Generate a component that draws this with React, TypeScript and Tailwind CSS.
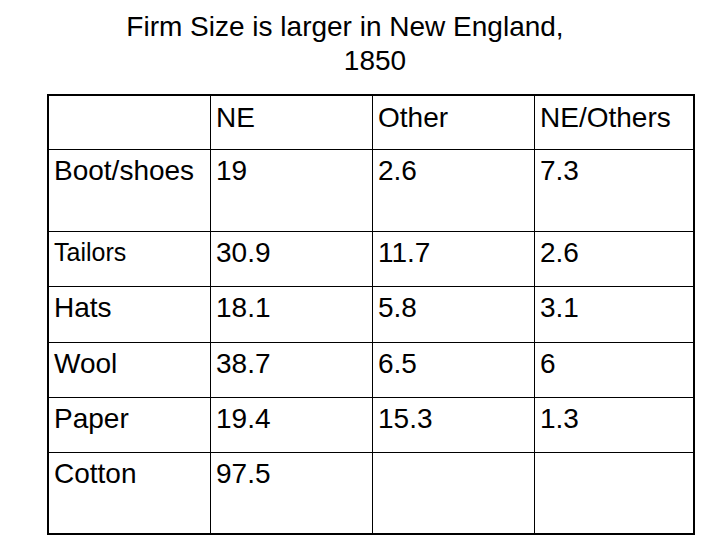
import React from 'react';

type Row = {
  label: string;
  values: string[];
  height: string;
  small?: boolean;
  last?: boolean;
};

const rows: Row[] = [
  { label: 'Boot/shoes', values: ['19', '2.6', '7.3'], height: 'h-[82px]' },
  { label: 'Tailors', values: ['30.9', '11.7', '2.6'], height: 'h-[55px]', small: true },
  { label: 'Hats', values: ['18.1', '5.8', '3.1'], height: 'h-[56px]' },
  { label: 'Wool', values: ['38.7', '6.5', '6'], height: 'h-[55px]' },
  { label: 'Paper', values: ['19.4', '15.3', '1.3'], height: 'h-[55px]' },
  { label: 'Cotton', values: ['97.5', '', ''], height: 'h-[80px]', last: true },
];

const App: React.FC = () => {
  return (
    <div className="w-[720px] h-[540px] bg-white text-black overflow-hidden font-['Liberation_Sans',Arial,sans-serif]">
      {/* title */}
      <div className="h-[94px] pt-[10px] text-[28px] leading-[34px]">
        <div className="text-center mr-[30px]">Firm Size is larger in New England,</div>
        <div className="text-center ml-[30px]">1850</div>
      </div>

      <div className="ml-[47px] w-[648px] border-2 border-black text-[28px] leading-[32px]">
        <div className="grid grid-cols-[161px_162px_162px_1fr] h-[54px] border-b border-black">
          <div className="pl-[5px] pt-[6px]"></div>
          <div className="border-l border-black pl-[5px] pt-[6px]">NE</div>
          <div className="border-l border-black pl-[5px] pt-[6px]">Other</div>
          <div className="border-l border-black pl-[5px] pt-[6px]">NE/Others</div>
        </div>

        {rows.map((r) => (
          <div
            key={r.label}
            className={`grid grid-cols-[161px_162px_162px_1fr] ${r.height} ${r.last ? '' : 'border-b border-black'}`}
          >
            <div className={`pl-[5px] ${r.small ? 'pt-[6px] text-[25px] leading-[29px]' : 'pt-[5px]'}`}>
              {r.label}
            </div>
            {r.values.map((v, i) => (
              <div key={i} className="border-l border-black pl-[5px] pt-[5px]">
                {v}
              </div>
            ))}
          </div>
        ))}
      </div>
    </div>
  );
};

export default App;
